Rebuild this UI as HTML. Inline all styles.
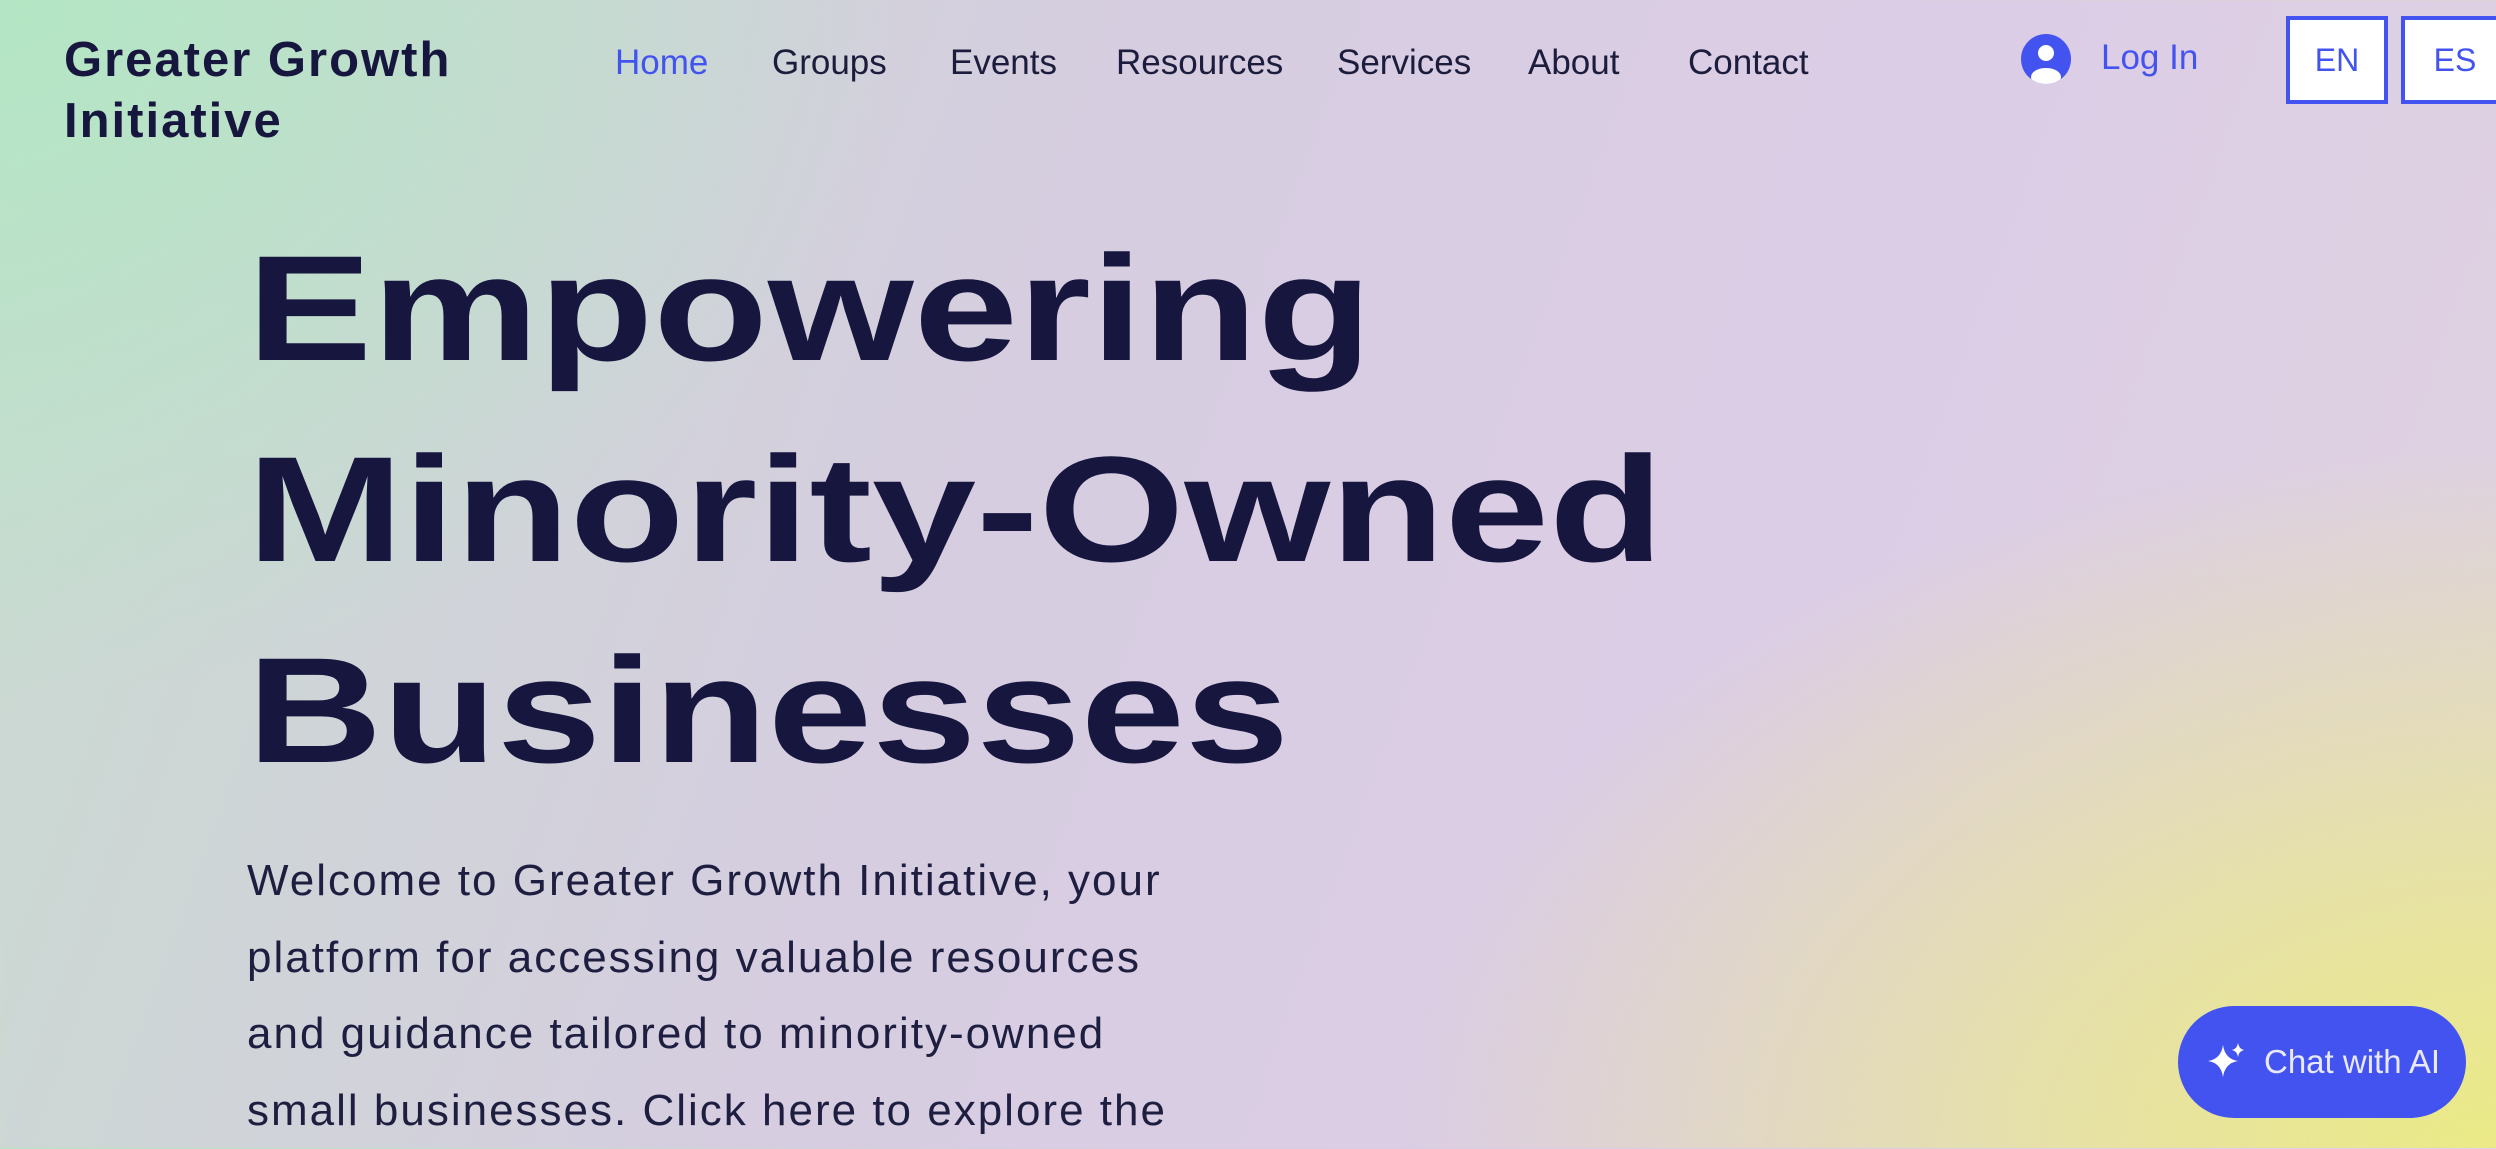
<!DOCTYPE html>
<html><head><meta charset="utf-8"><style>
html,body{margin:0;padding:0}
body{width:2496px;height:1148px;overflow:hidden;position:relative;font-family:"Liberation Sans",sans-serif;color:#16163f;
background:
radial-gradient(ellipse 900px 700px at 0px 0px,#b3e6c4 0%,rgba(179,230,196,0.6) 40%,rgba(179,230,196,0) 100%),
radial-gradient(ellipse 1100px 700px at 2496px 1148px,#ebea86 0%,rgba(235,234,134,0.7) 35%,rgba(235,234,134,0) 100%),
linear-gradient(110deg,#c8dccf 0%,#d6cde0 40%,#dccde6 70%,#dfd3e0 100%);}
.abs{position:absolute;white-space:nowrap}
.logo{left:64px;top:30px;font-size:49px;font-weight:bold;line-height:61px;letter-spacing:2px}
.nav{top:41px;font-size:35px;line-height:44px;color:#1c1c3c}
h1{position:absolute;left:247px;top:208px;margin:0;font-size:150px;line-height:201px;font-weight:900;color:#16163f;transform:scaleX(1.25);transform-origin:0 0;white-space:nowrap}
p{position:absolute;left:247px;top:843px;margin:0;font-size:44px;letter-spacing:2px;line-height:76.5px;color:#1e1e40;white-space:nowrap}
.box{position:absolute;top:16px;height:80px;border:4px solid #4353f0;background:#fff;color:#4353f0;font-size:32px;display:flex;align-items:center;justify-content:center}
.chat{position:absolute;left:2178px;top:1006px;width:288px;height:112px;border-radius:56px;background:#4353f0;color:#e8e8ff;font-size:33px;display:flex;align-items:center}
</style></head><body>
<div class="abs logo">Greater Growth<br>Initiative</div>
<div class="abs nav" style="left:615px;color:#4353f0">Home</div>
<div class="abs nav" style="left:772px">Groups</div>
<div class="abs nav" style="left:950px">Events</div>
<div class="abs nav" style="left:1116px">Resources</div>
<div class="abs nav" style="left:1337px">Services</div>
<div class="abs nav" style="left:1528px">About</div>
<div class="abs nav" style="left:1688px">Contact</div>
<svg class="abs" style="left:2020px;top:33px" width="52" height="52" viewBox="0 0 52 52"><defs><clipPath id="c"><circle cx="26" cy="26" r="25"/></clipPath></defs><circle cx="26" cy="26" r="25" fill="#4353f0"/><g clip-path="url(#c)"><circle cx="26" cy="20" r="8" fill="#fff"/><ellipse cx="26" cy="44" rx="15" ry="9" fill="#fff"/></g></svg>
<div class="abs nav" style="left:2101px;top:36px;color:#4353f0">Log In</div>
<div class="box" style="left:2286px;width:94px">EN</div>
<div class="box" style="left:2401px;width:100px">ES</div>
<h1>Empowering<br>Minority-Owned<br>Businesses</h1>
<p>Welcome to Greater Growth Initiative, your<br>platform for accessing valuable resources<br>and guidance tailored to minority-owned<br>small businesses. Click here to explore the</p>
<div class="chat"><svg style="margin-left:30px;margin-right:18px" width="38" height="38" viewBox="0 0 38 38"><path d="M15 8 Q17 22 30 24 Q17 26 15 40 Q13 26 0 24 Q13 22 15 8Z" fill="#fff" transform="translate(0,-6)"/><path d="M30 0 Q31 6 36 7 Q31 8 30 14 Q29 8 24 7 Q29 6 30 0Z" fill="#fff"/></svg>Chat with AI</div>
</body></html>
